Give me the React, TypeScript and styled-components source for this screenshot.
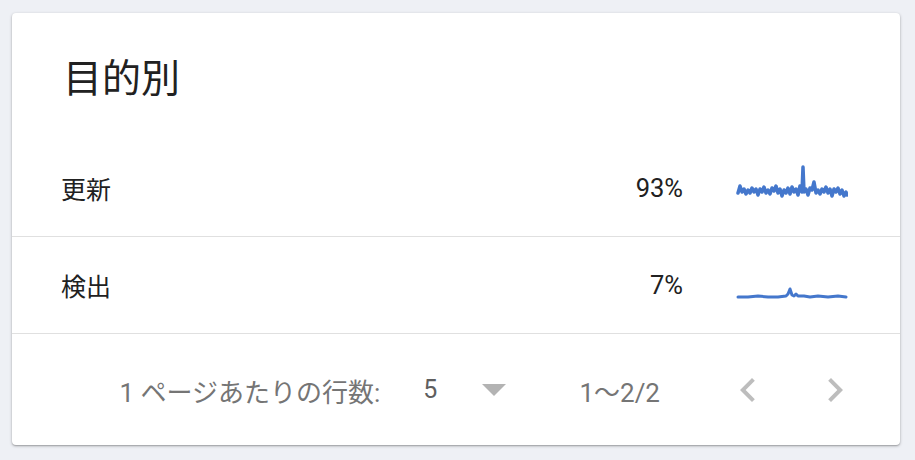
import styled, { createGlobalStyle } from "styled-components";
import { FC } from "react";

const GlobalStyle = createGlobalStyle`
  html, body {
    margin: 0;
    padding: 0;
    background: #eef0f5;
    font-family: Roboto, "Noto Sans CJK JP", sans-serif;
  }
`;

const Page = styled.div`
  width: 915px;
  height: 460px;
  padding: 13px 15px 15px 12px;
  box-sizing: border-box;
`;

const Card = styled.div`
  width: 888px;
  height: 432px;
  background: #ffffff;
  border-radius: 4px;
  box-shadow: 0 1px 3px rgba(0, 0, 0, 0.3), 0 1px 1px rgba(0, 0, 0, 0.12);
  display: flex;
  flex-direction: column;
  overflow: hidden;
`;

const Header = styled.div`
  height: 127px;
  display: flex;
  align-items: center;
  padding-left: 51px;
  box-sizing: border-box;
`;

const Title = styled.h1`
  margin: 0;
  font-family: "Noto Sans CJK JP", sans-serif;
  font-size: 39px;
  font-weight: 400;
  color: #212121;
  line-height: 1;
  margin-top: -2px;
`;

const Row = styled.div`
  height: 96px;
  display: flex;
  align-items: center;
  padding: 0 52px 0 49px;
  border-bottom: 1px solid #e0e0e0;
`;

const RowLabel = styled.div`
  flex: 1;
  font-family: "Noto Sans CJK JP", sans-serif;
  font-size: 25px;
  color: #212121;
`;

const RowValue = styled.div`
  font-family: Roboto, sans-serif;
  font-size: 25.5px;
  color: #212121;
  text-align: right;
  margin-right: 53px;
`;

const Spark = styled.svg`
  display: block;
  width: 112px;
  height: 48px;
`;

const Footer = styled.div`
  flex: 1;
  display: flex;
  align-items: center;
  justify-content: flex-end;
  padding-right: 41px;
  color: #757575;
  font-family: Roboto, "Noto Sans CJK JP", sans-serif;
  font-size: 26px;
`;

const FooterLabel = styled.span`
  margin-top: 1px;
`;

const SelectValue = styled.span`
  margin-left: 43px;
  color: #5f5f5f;
  font-size: 25px;
`;

const SelectArrow = styled.span`
  margin-left: 45px;
  width: 0;
  height: 0;
  border-left: 12px solid transparent;
  border-right: 12px solid transparent;
  border-top: 12px solid #b3b3b3;
`;

const Range = styled.span`
  margin-left: 73px;
  margin-right: 64px;
  margin-top: 2px;
`;

const IconButton = styled.svg<{ gap?: number }>`
  display: block;
  width: 48px;
  height: 48px;
  margin-left: ${({ gap }) => gap ?? 0}px;
  fill: #bdbdbd;
`;

const row1 = [
  [0, 193], [2, 186], [4, 192], [6, 189], [8, 194], [10, 190], [12, 193], [14, 188], [16, 192],
  [18, 189], [20, 195], [22, 189], [24, 192], [26, 187], [28, 193], [30, 190], [32, 194], [34, 188],
  [36, 191], [38, 186], [40, 193], [42, 189], [44, 196], [46, 190], [48, 193], [50, 188], [52, 194],
  [54, 187], [56, 192], [58, 189], [60, 195], [62, 186], [64, 192], [65, 167], [66, 192], [68, 189],
  [70, 195], [72, 188], [74, 190], [76, 182], [78, 193], [80, 190], [82, 194], [84, 189], [86, 192],
  [88, 187], [90, 193], [92, 189], [94, 196], [96, 189], [98, 192], [100, 188], [102, 194], [104, 190],
  [106, 196], [108, 192], [109, 195],
];

const row2 = [
  [0, 297], [10, 297], [20, 296], [30, 297], [40, 297], [48, 296], [50, 294], [52, 289], [54, 295],
  [56, 296], [58, 294], [60, 296], [66, 296], [72, 297], [80, 296], [90, 297], [100, 296], [108, 297],
];

const toPoints = (pts: number[][], top: number) =>
  pts.map(([x, y]) => `${x + 2},${y - top}`).join(" ");

interface ISparkline {
  points: number[][];
  top: number;
  weight: number;
}

const Sparkline: FC<ISparkline> = ({ points, top, weight }) => (
  <Spark viewBox="0 0 112 48">
    <polyline
      points={toPoints(points, top)}
      fill="none"
      stroke="#4477cc"
      strokeWidth={weight}
      strokeLinejoin="round"
      strokeLinecap="round"
    />
  </Spark>
);

export default function App() {
  return (
    <>
      <GlobalStyle />
      <Page>
        <Card>
          <Header>
            <Title>目的別</Title>
          </Header>
          <Row>
            <RowLabel>更新</RowLabel>
            <RowValue>93%</RowValue>
            <Sparkline points={row1} top={164} weight={3.5} />
          </Row>
          <Row>
            <RowLabel>検出</RowLabel>
            <RowValue>7%</RowValue>
            <Sparkline points={row2} top={261} weight={3} />
          </Row>
          <Footer>
            <FooterLabel>1 ページあたりの行数:</FooterLabel>
            <SelectValue>5</SelectValue>
            <SelectArrow />
            <Range>1〜2/2</Range>
            <IconButton viewBox="0 0 24 24">
              <path d="M15.41 7.41L14 6l-6 6 6 6 1.41-1.41L10.83 12z" />
            </IconButton>
            <IconButton viewBox="0 0 24 24" gap={39}>
              <path d="M10 6L8.59 7.41 13.17 12l-4.58 4.59L10 18l6-6z" />
            </IconButton>
          </Footer>
        </Card>
      </Page>
    </>
  );
}
